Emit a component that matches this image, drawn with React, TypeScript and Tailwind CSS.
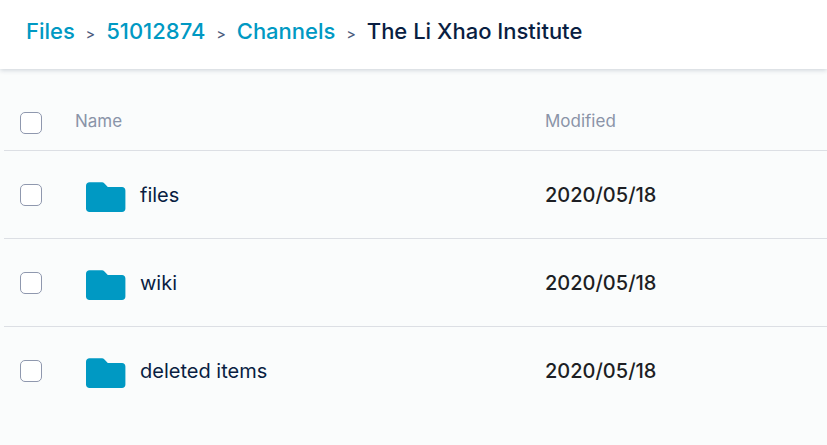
import React from 'react';

interface FileItem {
  name: string;
  modified: string;
}

const parents = ['Files', '51012874', 'Channels'];
const current = 'The Li Xhao Institute';

const items: FileItem[] = [
  { name: 'files', modified: '2020/05/18' },
  { name: 'wiki', modified: '2020/05/18' },
  { name: 'deleted items', modified: '2020/05/18' },
];

const FolderIcon: React.FC = () => (
  <svg className="mt-1 h-[30px] w-10 shrink-0 text-[#0099c3]" viewBox="0 0 40 30" fill="currentColor" aria-hidden="true">
    <path d="M3.5 0.3H16C17 0.3 17.6 0.6 18.2 1.2L21.8 5H36C38 5 39.4 6.4 39.4 8.4V26.6C39.4 28.6 38 30 36 30H3.5C1.5 30 0 28.6 0 26.6V3.8C0 1.8 1.5 0.3 3.5 0.3Z" />
  </svg>
);

interface CheckboxProps {
  label: string;
}

const Checkbox: React.FC<CheckboxProps> = ({ label }) => (
  <input
    type="checkbox"
    aria-label={label}
    className="block size-[22px] appearance-none rounded-[5px] border border-[#8f98ae] bg-white checked:bg-[#0099c3]"
  />
);

const Breadcrumbs: React.FC = () => (
  <nav aria-label="Breadcrumb" className="bg-white px-[26px] pt-[15px] pb-[22px] shadow-[0_1px_5px_rgba(9,30,66,0.2)]">
    <ol className="flex items-baseline text-[22px] leading-8 font-medium">
      {parents.map((name) => (
        <li key={name} className="flex items-baseline">
          <a href="#" className="text-[#0099c3]">{name}</a>
          <span className="mx-[11px] text-sm text-[#4d5b7c]" aria-hidden="true">&gt;</span>
        </li>
      ))}
      <li className="text-[#091e42]" aria-current="page">{current}</li>
    </ol>
  </nav>
);

const FileTable: React.FC = () => (
  <table className="w-full table-fixed border-collapse text-left">
    <colgroup>
      <col className="w-[71px]" />
      <col className="w-[470px]" />
      <col />
    </colgroup>
    <thead>
      <tr className="h-[59px] text-[17px] leading-6 text-[#8a94a8]">
        <th className="pt-[6px] pl-4"><Checkbox label="Select all" /></th>
        <th className="pt-[2px] font-normal">Name</th>
        <th className="pt-[2px] font-normal">Modified</th>
      </tr>
    </thead>
    <tbody className="text-xl">
      {items.map((item) => (
        <tr key={item.name} className="h-[88px] border-t border-[#dcdfe4]">
          <td className="pt-px pl-4"><Checkbox label={`Select ${item.name}`} /></td>
          <td className="pt-[2px]">
            <a href="#" className="flex items-center gap-[14px] pl-[11px] text-[#091e42]">
              <FolderIcon />
              {item.name}
            </a>
          </td>
          <td className="pt-[2px] font-medium text-[#1d1f24]">{item.modified}</td>
        </tr>
      ))}
    </tbody>
  </table>
);

export default function App() {
  return (
    <div className="min-h-screen bg-[#fafcfc] font-[Inter,sans-serif]">
      <Breadcrumbs />
      <main className="pt-[22px] pl-1">
        <FileTable />
      </main>
    </div>
  );
}
